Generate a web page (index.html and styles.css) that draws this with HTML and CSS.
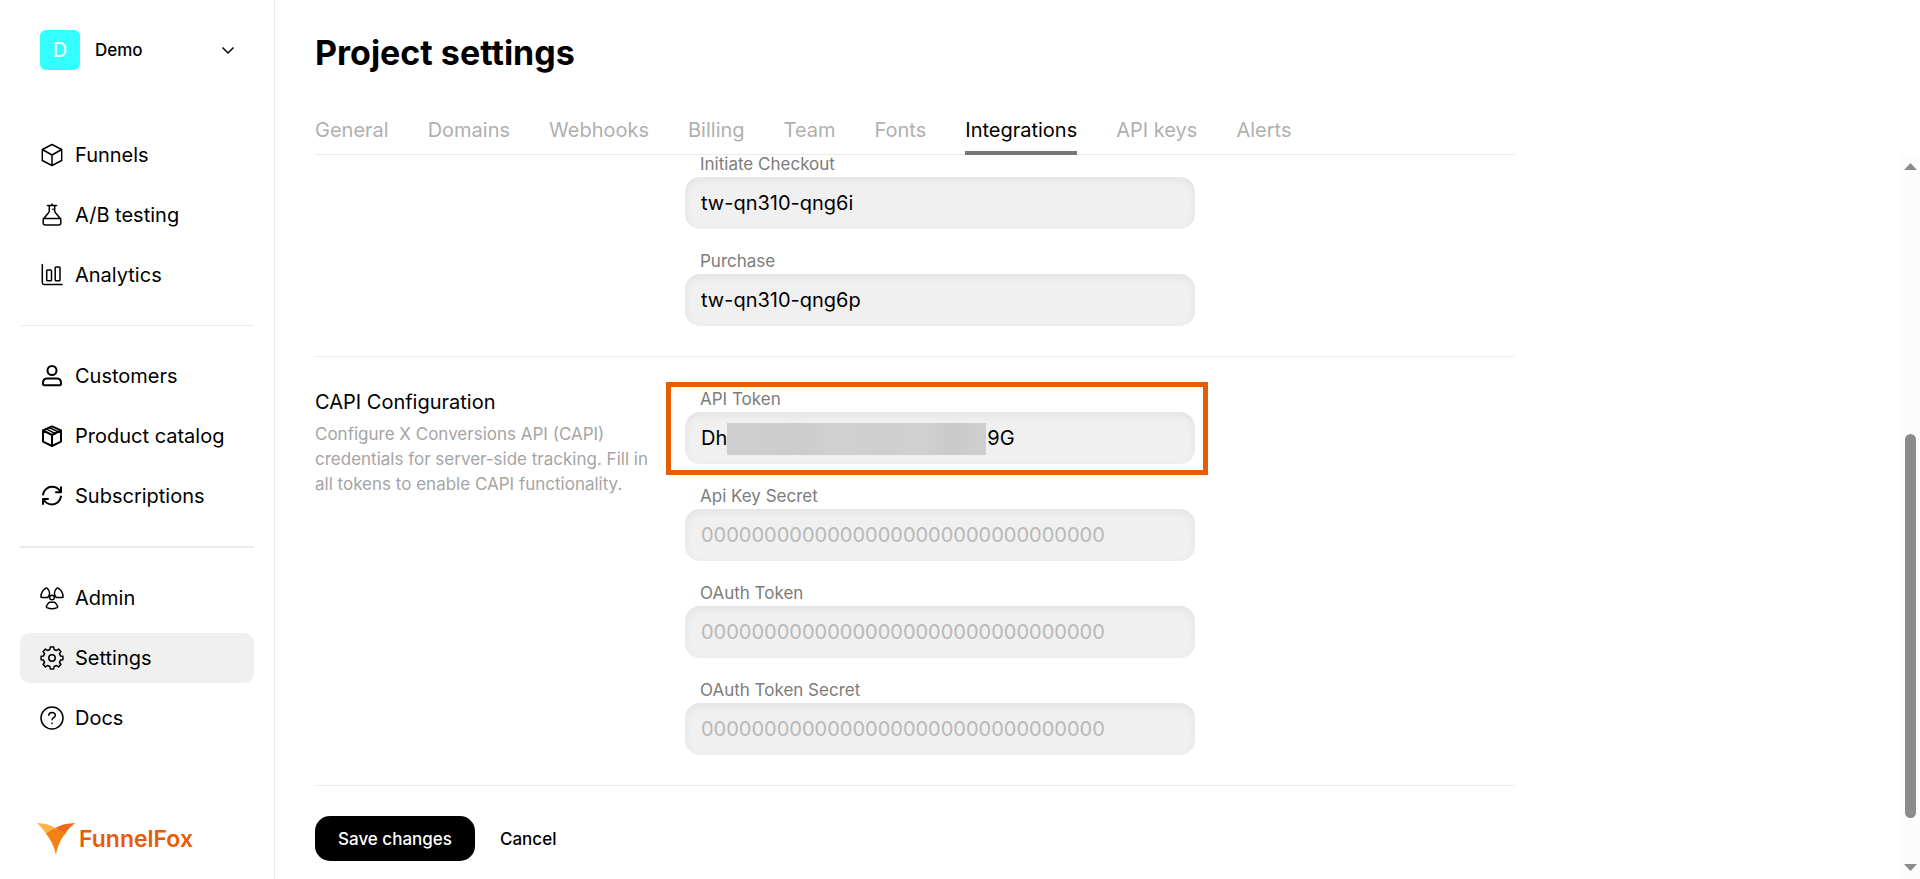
FILE: index.html
```html
<!DOCTYPE html>
<html lang="en">
<head>
    <meta charset="UTF-8">
    <meta name="viewport" content="width=device-width, initial-scale=1.0">
    <title>Project settings</title>
    <link rel="stylesheet" href="styles.css">
</head>
<body>
    <aside class="sidebar">
        <button type="button" class="project-switch">
            <span class="avatar">D</span>
            <span class="project-name">Demo</span>
            <svg class="chevron" width="14" height="14" viewBox="0 0 14 14"><path d="M1.500 4.500l5.500 5.500L12.500 4.500"/></svg>
        </button>

        <nav class="menu">
            <div class="menu-group">
                <a href="#" class="menu-item">
                    <svg class="icon" viewBox="0 0 24 24"><path d="M12 1.500l9.700 5v11L12 22.500l-9.700-5v-11zM2.300 6.500L12 12l9.700-5.500M12 12v10.500"/></svg>
                    Funnels
                </a>
                <a href="#" class="menu-item">
                    <svg class="icon" viewBox="0 0 24 24"><path d="M12 1v1.500M7.500 2.500h9M9.300 2.500v5.300c0 1-.4 1.600-1 2.300L4 15.200c-.5.600-.8 1.200-.8 2V20c0 1.200.8 2 2 2h13.600c1.200 0 2-.8 2-2v-2.800c0-.8-.3-1.400-.8-2l-4.300-5.100c-.6-.7-1-1.300-1-2.300V2.500M3.200 15.500h17.600M13 6v.5"/></svg>
                    A/B testing
                </a>
                <a href="#" class="menu-item">
                    <svg class="icon" viewBox="0 0 24 24"><path d="M2.300 1.500v18.300c0 1 .7 1.700 1.700 1.700h18M7.500 7h3.200c.5 0 .8.300.8.800V17c0 .5-.3.800-.8.800H7.500c-.5 0-.8-.3-.8-.8V7.800c0-.5.300-.8.800-.8zM16 4h3.200c.5 0 .8.300.8.800V17c0 .5-.3.800-.8.800H16c-.5 0-.8-.3-.8-.8V4.800c0-.5.300-.8.800-.8z"/></svg>
                    Analytics
                </a>
            </div>
            <div class="menu-group">
                <a href="#" class="menu-item">
                    <svg class="icon icon-bold" viewBox="0 0 24 24"><circle cx="12" cy="6.500" r="4.500"/><path d="M7 14.500h10c2.500 0 4 2 4 4.500v1c0 .8-.4 1.200-1.200 1.200H4.200C3.400 21.200 3 20.800 3 20v-1c0-2.500 1.500-4.500 4-4.500z"/></svg>
                    Customers
                </a>
                <a href="#" class="menu-item">
                    <svg class="icon icon-bold" viewBox="0 0 24 24"><path d="M12 2.300l9 4v11.400l-9 4.300-9-4.300V6.300zM3 6.300L12 11l9-4.700M12 11v11"/><path stroke-width="1.500" d="M6 4.900l9.500 4.700M9 3.500l9.300 4.400"/></svg>
                    Product catalog
                </a>
                <a href="#" class="menu-item">
                    <svg class="icon icon-bold" viewBox="0 0 24 24"><path d="M3 10.500C3.800 6 7.500 2.800 12 2.800c3.500 0 6.500 1.800 8.500 4.700M21 3.200v5h-5M21 12.500c-.8 4.600-4.500 7.900-9 7.900-3.500 0-6.500-1.800-8.500-4.700M3 20v-5h5"/></svg>
                    Subscriptions
                </a>
            </div>
            <div class="menu-group">
                <a href="#" class="menu-item">
                    <svg class="icon" viewBox="0 0 24 24"><circle cx="12" cy="11.500" r="2.300"/><path d="M7.300 2.300c1.400 1.400 2.300 3.200 2.300 5 0 1.500-.8 3-1.800 4.200H1.700c-.5 0-.8-.3-.8-.8.2-3.700 1.800-6.500 4.900-8.500.5-.4 1.100-.3 1.500.1zM16.700 2.300c-1.400 1.400-2.300 3.200-2.300 5 0 1.500.8 3 1.800 4.200h6.100c.5 0 .8-.3.8-.8-.2-3.700-1.800-6.500-4.900-8.500-.5-.4-1.100-.3-1.500.1zM9.500 16.200h5c1.300.8 2.300 2.300 3 4 .3.600.1 1.100-.4 1.400-3.200 1.500-7 1.500-10.200 0-.5-.3-.7-.8-.4-1.400.7-1.700 1.700-3.200 3-4z"/></svg>
                    Admin
                </a>
                <a href="#" class="menu-item active">
                    <svg class="icon" viewBox="0 0 24 24"><circle cx="12" cy="12" r="3.200"/><path d="M10.300 1.100h3.400L14.100 3.500L16.500 4.500L18.500 3.100L20.900 5.500L19.500 7.500L20.500 9.900L22.900 10.300V13.700L20.500 14.100L19.500 16.500L20.900 18.500L18.500 20.900L16.500 19.500L14.100 20.500L13.700 22.900H10.300L9.900 20.500L7.500 19.500L5.500 20.900L3.100 18.500L4.500 16.500L3.500 14.100L1.100 13.700V10.300L3.500 9.900L4.500 7.500L3.100 5.500L5.500 3.100L7.500 4.500L9.900 3.500z"/></svg>
                    Settings
                </a>
                <a href="#" class="menu-item">
                    <svg class="icon" viewBox="0 0 24 24"><circle cx="12" cy="12" r="11"/><path d="M8.800 9.200c.3-1.700 1.500-2.700 3.200-2.700 1.900 0 3.300 1.200 3.300 2.900 0 2.300-3.200 2.300-3.200 4.300M12 17v.5"/></svg>
                    Docs
                </a>
            </div>
        </nav>

        <a href="#" class="logo">
            <svg width="38" height="32" viewBox="0 0 38 32">
                <path fill="#ffb545" d="M0 0c7 .2 13.500 1.800 18.500 5L10 12C7.500 8 4 4 0 0z"/>
                <path fill="#ec6a1c" d="M38 0c-7 .2-14.500 1.800-19.500 5L28 11C30.500 7 34 3.500 38 0z"/>
                <path fill="#f28116" d="M9 10.500C12 8.500 15 6.800 18.500 5c3.500 1.600 6.800 3.300 10.300 5C23.500 16.500 20.500 23.500 19 32 17.500 24 14 17 9 10.500z"/>
            </svg>
            FunnelFox
        </a>
    </aside>

    <main class="content">
        <header class="page-header">
            <h1>Project settings</h1>
            <nav class="tabs">
                <a href="#" class="tab">General</a>
                <a href="#" class="tab">Domains</a>
                <a href="#" class="tab">Webhooks</a>
                <a href="#" class="tab">Billing</a>
                <a href="#" class="tab">Team</a>
                <a href="#" class="tab">Fonts</a>
                <a href="#" class="tab active">Integrations</a>
                <a href="#" class="tab">API keys</a>
                <a href="#" class="tab">Alerts</a>
            </nav>
        </header>

        <div class="scroll-area">
            <form class="settings-form">
                <section class="section">
                    <div class="fields">
                        <div class="field">
                            <label for="checkout">Initiate Checkout</label>
                            <input type="text" id="checkout" value="tw-qn310-qng6i">
                        </div>
                        <div class="field">
                            <label for="purchase">Purchase</label>
                            <input type="text" id="purchase" value="tw-qn310-qng6p">
                        </div>
                    </div>
                </section>

                <section class="section">
                    <div class="section-info">
                        <h2>CAPI Configuration</h2>
                        <p>Configure X Conversions API (CAPI) credentials for server-side tracking. Fill in all tokens to enable CAPI functionality.</p>
                    </div>
                    <div class="fields">
                        <div class="field highlighted">
                            <label for="token">API Token</label>
                            <input type="text" id="token" value="Dh&emsp;&emsp;&emsp;&emsp;&emsp;&emsp;&emsp;&emsp;&emsp;&emsp;&emsp;&emsp;&emsp;9G">
                            <span class="redacted"></span>
                        </div>
                        <div class="field">
                            <label for="key-secret">Api Key Secret</label>
                            <input type="text" id="key-secret" placeholder="00000000000000000000000000000000">
                        </div>
                        <div class="field">
                            <label for="oauth-token">OAuth Token</label>
                            <input type="text" id="oauth-token" placeholder="00000000000000000000000000000000">
                        </div>
                        <div class="field">
                            <label for="oauth-secret">OAuth Token Secret</label>
                            <input type="text" id="oauth-secret" placeholder="00000000000000000000000000000000">
                        </div>
                    </div>
                </section>

                <div class="actions">
                    <button type="submit" class="btn btn-primary">Save changes</button>
                    <button type="button" class="btn">Cancel</button>
                </div>
            </form>

            <div class="scrollbar">
                <svg width="13" height="7" viewBox="0 0 13 7"><path d="M0 7l6.500-7L13 7z"/></svg>
                <div class="scroll-track"><div class="scroll-thumb"></div></div>
                <svg width="13" height="7" viewBox="0 0 13 7"><path d="M0 0l6.500 7L13 0z"/></svg>
            </div>
        </div>
    </main>
</body>
</html>
```

FILE: styles.css
```css
:root {
    --text-color: #000;
    --muted-color: #b0b0b0;
    --label-color: #7c7c7c;
    --border-color: #ebebeb;
    --field-color: #f0f0f0;
    --accent-color: #e85d04;
    --scroll-color: #8b8b8b;
}

* {
    box-sizing: border-box;
    margin: 0;
    padding: 0;
}

body {
    display: flex;
    height: 100vh;
    overflow: hidden;
    background: #fff;
    color: var(--text-color);
    font-family: Inter, "Liberation Sans", sans-serif;
    font-size: 20px;
}

a {
    color: inherit;
    text-decoration: none;
}

button, input {
    font: inherit;
    color: inherit;
    border: none;
    background: none;
}

/* Sidebar */
.sidebar {
    display: flex;
    flex-direction: column;
    flex-shrink: 0;
    width: 275px;
    padding: 30px 20px 20px;
    border-right: 1px solid var(--border-color);
}

.project-switch {
    display: flex;
    align-items: center;
    gap: 15px;
    padding: 0 19px 0 20px;
    margin-bottom: 60px;
    font-size: 17px;
    font-weight: 500;
    cursor: pointer;
}

.avatar {
    width: 40px;
    height: 40px;
    border-radius: 6px;
    background: #33ffff;
    color: #fff;
    font-size: 20px;
    font-weight: 400;
    line-height: 40px;
}

.project-name {
    flex: 1;
    text-align: left;
}

.chevron {
    fill: none;
    stroke: #000;
    stroke-width: 1.5;
}

.menu-group {
    display: flex;
    flex-direction: column;
    gap: 10px;
    padding-bottom: 25px;
}

.menu-group + .menu-group {
    padding-top: 25px;
    border-top: 1px solid var(--border-color);
}

.menu-group:last-child {
    border-top-width: 2px;
}

.menu-item {
    display: flex;
    align-items: center;
    gap: 11px;
    height: 50px;
    padding: 0 20px;
    border-radius: 10px;
}

.menu-item.active {
    background: var(--field-color);
}

.icon {
    width: 24px;
    height: 24px;
    fill: none;
    stroke: #000;
    stroke-width: 1.5;
    stroke-linecap: round;
    stroke-linejoin: round;
}

.icon-bold {
    stroke-width: 2;
}

.logo {
    display: flex;
    align-items: center;
    gap: 4px;
    margin-top: auto;
    padding: 0 17px;
    color: var(--accent-color);
    font-size: 23px;
    font-weight: 600;
    line-height: 40px;
}

/* Page */
.content {
    display: flex;
    flex: 1;
    flex-direction: column;
    min-width: 0;
}

.page-header {
    max-width: 1240px;
    padding: 30px 0 0 40px;
}

h1 {
    margin-bottom: 44px;
    font-size: 34px;
    font-weight: 700;
    line-height: 46px;
}

.tabs {
    display: flex;
    gap: 39px;
    border-bottom: 1px solid var(--border-color);
    color: var(--muted-color);
}

.tab {
    height: 35px;
    margin-bottom: -1px;
    line-height: 20px;
    border-bottom: 4px solid transparent;
}

.tab.active {
    color: var(--text-color);
    border-bottom-color: #777;
}

.scroll-area {
    display: flex;
    flex: 1;
    justify-content: space-between;
    min-height: 0;
}

.settings-form {
    flex: 1;
    max-width: 1240px;
    padding-left: 40px;
}

.section {
    display: grid;
    grid-template-columns: 370px 510px;
    padding-bottom: 30px;
    margin-bottom: 33px;
    border-bottom: 1px solid var(--border-color);
}

.section:last-of-type {
    margin-bottom: 30px;
}

.section-info {
    padding-right: 25px;
}

h2 {
    margin-bottom: 8px;
    font-size: 20px;
    font-weight: 400;
    line-height: 24px;
}

.section-info p {
    color: #a5a5a5;
    font-size: 17px;
    line-height: 25px;
}

.fields {
    display: flex;
    flex-direction: column;
    grid-column: 2;
    gap: 23px;
}

.field {
    position: relative;
    display: flex;
    flex-direction: column;
    gap: 4px;
}

.field label {
    padding-left: 15px;
    color: var(--label-color);
    font-size: 17px;
    line-height: 18px;
}

.field input {
    width: 100%;
    height: 52px;
    padding: 0 16px;
    border-radius: 15px;
    background: var(--field-color);
    box-shadow: inset 0 3px 8px rgba(0, 0, 0, 0.06);
}

.field input::placeholder {
    color: #b8b8b8;
}

/* Callout frame around the token field */
.highlighted::after {
    content: "";
    position: absolute;
    inset: -8px -13px -11px -19px;
    border: 5px solid var(--accent-color);
    pointer-events: none;
}

.redacted {
    position: absolute;
    left: 42px;
    bottom: 9px;
    width: 259px;
    height: 32px;
    background: linear-gradient(90deg, #cfcfcf, #cccccd 28%, #d1d1d1 42%, #cecece 60%, #d1d1d1 75%, #c9c9c9 87%, #d0d0d0);
}

.actions {
    display: flex;
    gap: 5px;
}

.btn {
    height: 45px;
    padding: 0 20px;
    border-radius: 15px;
    font-size: 17px;
    font-weight: 500;
    cursor: pointer;
}

.btn-primary {
    min-width: 160px;
    background: #000;
    color: #fff;
}

.scrollbar {
    display: flex;
    flex-direction: column;
    align-items: center;
    gap: 8px;
    width: 19px;
    padding: 8px 0;
    background: #fcfcfc;
    fill: var(--scroll-color);
}

.scroll-track {
    display: flex;
    flex: 1;
    flex-direction: column;
    justify-content: flex-end;
    padding-bottom: 38px;
}

.scroll-thumb {
    width: 11px;
    height: 60%;
    border-radius: 6px;
    background: var(--scroll-color);
}
```
